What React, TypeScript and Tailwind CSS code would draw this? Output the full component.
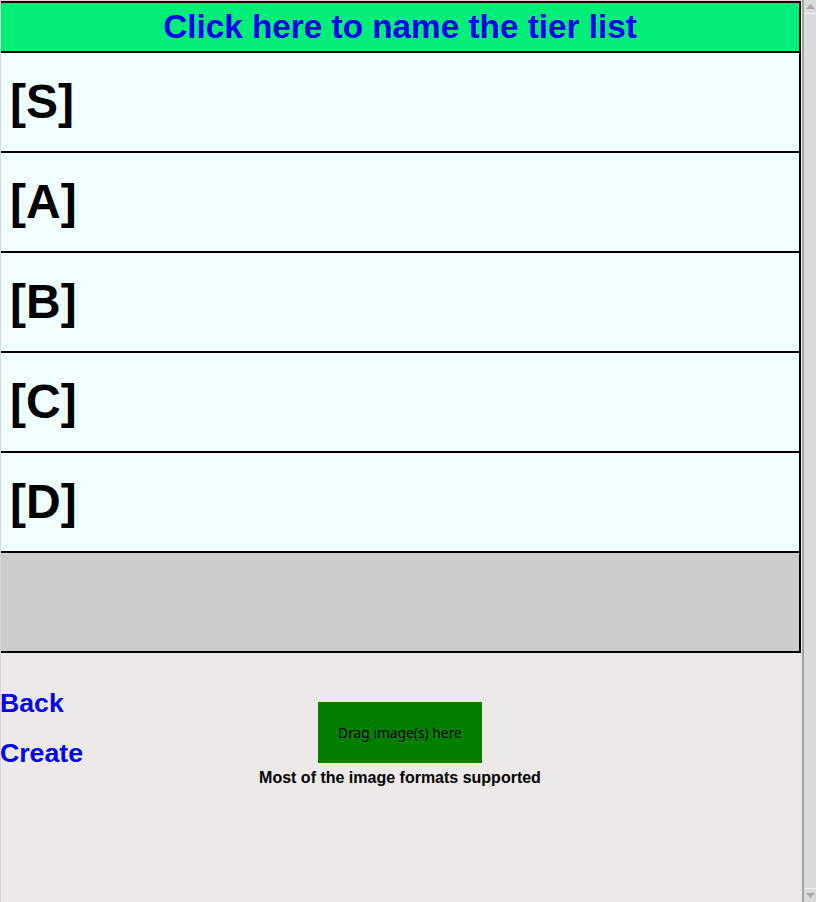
const tiers = ["S", "A", "B", "C", "D"];

const App = () => {
    return (
        <div className="w-[816px] h-[902px] flex bg-[#d6d6d6] overflow-hidden" style={{ fontFamily: '"Liberation Sans", Arial, sans-serif' }}>
            <div className="w-[801px] h-[901px] ml-px mt-px bg-[#ede9e8] flex flex-col">
                <div className="w-[800px] border-t-2 border-r-2 border-black">
                    <div className="h-[48px] bg-[#00ee77] flex items-center justify-center">
                        <span className="text-[33.3px] font-bold text-[#0000ee] leading-none">Click here to name the tier list</span>
                    </div>
                    {tiers.map((t) => (
                        <div key={t} className="h-[100px] border-t-2 border-black bg-[#f0ffff] flex items-center px-[9px]">
                            <span className="text-[48px] font-bold text-black leading-none">[{t}]</span>
                        </div>
                    ))}
                    <div className="h-[102px] border-t-2 border-b-2 border-black bg-[#cccccc]" />
                </div>
                <div className="grid grid-cols-[1fr_auto_1fr] w-[798px] pt-[37px]">
                    <div className="flex flex-col gap-[23px] -ml-px">
                        <a className="text-[26.67px] font-bold text-[#0000ee] leading-[27px] cursor-pointer">Back</a>
                        <a className="text-[26.67px] font-bold text-[#0000ee] leading-[27px] cursor-pointer">Create</a>
                    </div>
                    <div className="flex flex-col items-center pt-[12px]">
                        <div className="w-[164px] h-[61px] bg-[#008000] flex items-center justify-center">
                            <span className="text-[13.8px] text-black leading-none" style={{ fontFamily: '"Noto Sans", "Open Sans", sans-serif' }}>Drag image(s) here</span>
                        </div>
                        <span className="text-[16px] font-bold text-black mt-[6px] leading-[18px]">Most of the image formats supported</span>
                    </div>
                    <div />
                </div>
            </div>
            <div className="w-[14px] h-[902px] border-l-2 border-[#a3a3a3] bg-[#dadada] flex flex-col justify-between">
                <div className="h-[14px] border-b border-[#f2f2f2] flex items-center justify-center">
                    <svg width="9" height="6" viewBox="0 0 9 6"><polygon points="4.5,0 9,5 0,5" fill="#a8a8a8" /></svg>
                </div>
                <div className="h-[14px] border-t border-[#f2f2f2] flex items-center justify-center">
                    <svg width="9" height="6" viewBox="0 0 9 6"><polygon points="0,0 9,0 4.5,5" fill="#a8a8a8" /></svg>
                </div>
            </div>
        </div>
    );
};

export default App;
